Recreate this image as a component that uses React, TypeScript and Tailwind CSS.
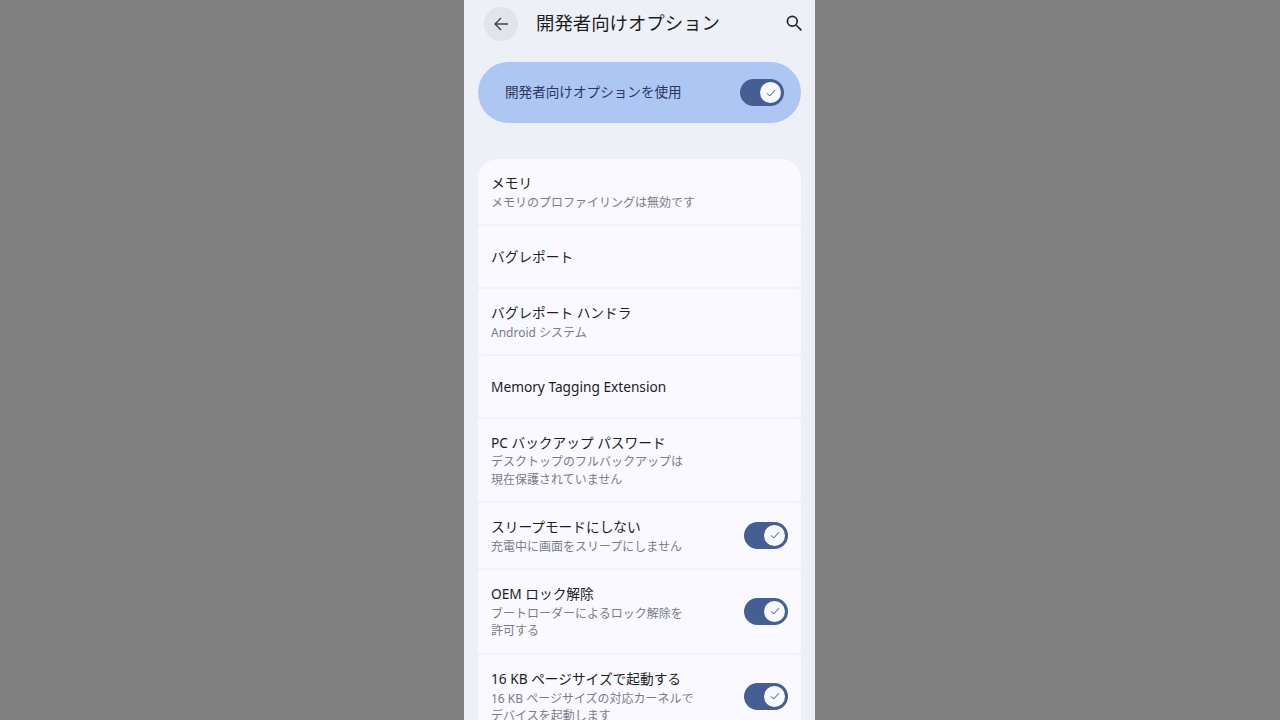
import React from "react";

function Toggle() {
  return (
    <div className="flex h-[27px] w-[44px] shrink-0 items-center justify-end rounded-full bg-[#465f93] pr-[3px]">
      <div className="flex h-[21px] w-[21px] items-center justify-center rounded-full bg-[#f8f9fe]">
        <svg width="12" height="12" viewBox="0 0 12 12" fill="none" stroke="#4a5468" strokeWidth="1">
          <path d="M2 6.3 L4.7 9 L10 3.2" />
        </svg>
      </div>
    </div>
  );
}

function Row({ title, sub, toggle, h, top = false }: { title: string; sub?: string[]; toggle?: boolean; h: string; top?: boolean }) {
  return (
    <div className={`mb-[2px] flex items-center justify-between bg-[#f9f9ff] pl-[13px] pr-[13px] ${h} ${top ? "rounded-t-[20px] rounded-b-[4px]" : "rounded-[4px]"}`}>
      <div className="flex min-w-0 flex-col pt-[1px]">
        <div className="mb-[0.5px] text-[13.7px] leading-[20px] text-[#1c1e24]">{title}</div>
        {sub?.map((s) => (
          <div key={s} className="text-[12px] leading-[17.5px] text-[#7b7d84]">{s}</div>
        ))}
      </div>
      {toggle && <div className="-mt-[1px]"><Toggle /></div>}
    </div>
  );
}

export default function App() {
  return (
    <div className="flex h-screen w-full justify-start overflow-hidden bg-[#808080] pl-[464px] font-['Noto_Sans','Noto_Sans_CJK_JP',sans-serif]">
      <div className="flex h-[720px] w-[351px] flex-col overflow-hidden bg-[#eef0f8]">
        <div className="flex h-[62px] shrink-0 items-start pl-[20px] pr-[12px] pt-[7px]">
          <div className="flex h-[34px] w-[34px] items-center justify-center rounded-full bg-[#e2e4ec]">
            <svg width="16" height="16" viewBox="0 0 16 16" fill="none" stroke="#3f434c" strokeWidth="1.4">
              <path d="M15 8H2M8 2L2 8l6 6" />
            </svg>
          </div>
          <div className="ml-[18px] mt-[2px] flex-1 text-[18.4px] leading-[27px] text-[#1c1e24]">開発者向けオプション</div>
          <svg className="mt-[7px]" width="18" height="18" viewBox="0 0 18 18" fill="none" stroke="#22252b" strokeWidth="1.7">
            <circle cx="7.3" cy="7.3" r="4.9" />
            <path d="M11 11l5.4 5.4" />
          </svg>
        </div>
        <div className="mx-[14px] flex h-[61px] shrink-0 items-center justify-between rounded-full bg-[#aec6f4] pl-[27px] pr-[17px]">
          <div className="text-[13.6px] text-[#29375c]">開発者向けオプションを使用</div>
          <Toggle />
        </div>
        <div className="mx-[14px] mt-[36px] flex flex-col rounded-t-[20px] bg-[#f2f3fa]">
          <Row top h="h-[65px]" title="メモリ" sub={["メモリのプロファイリングは無効です"]} />
          <Row h="h-[61px]" title="バグレポート" />
          <Row h="h-[65px]" title="バグレポート ハンドラ" sub={["Android システム"]} />
          <Row h="h-[61px]" title="Memory Tagging Extension" />
          <Row h="h-[82px]" title="PC バックアップ パスワード" sub={["デスクトップのフルバックアップは", "現在保護されていません"]} />
          <Row h="h-[65px]" title="スリープモードにしない" sub={["充電中に画面をスリープにしません"]} toggle />
          <Row h="h-[83px]" title="OEM ロック解除" sub={["ブートローダーによるロック解除を", "許可する"]} toggle />
          <Row h="h-[83px]" title="16 KB ページサイズで起動する" sub={["16 KB ページサイズの対応カーネルで", "デバイスを起動します"]} toggle />
        </div>
      </div>
    </div>
  );
}
